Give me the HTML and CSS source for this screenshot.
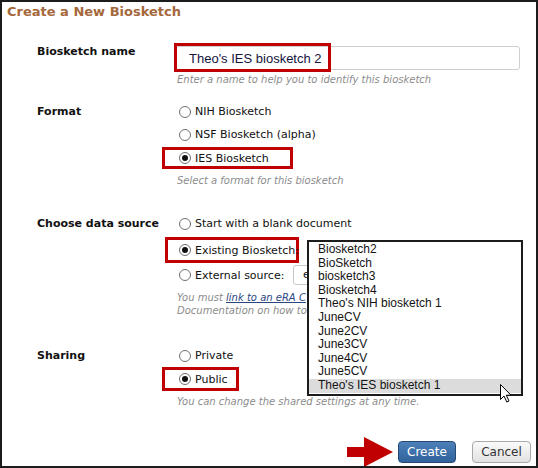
FILE: index.html
```html
<!DOCTYPE html>
<html lang="en">
<head>
    <meta charset="UTF-8">
    <title>Create a New Biosketch</title>
    <link rel="stylesheet" href="styles.css">
</head>
<body>
    <div class="dialog">
        <h2 class="title">Create a New Biosketch</h2>

        <form class="form">
            <div class="field">
                <div class="label">Biosketch name</div>
                <div class="control">
                    <div class="name-wrap">
                        <input type="text" class="text-input" value="Theo's IES biosketch 2">
                        <span class="name-mark"></span>
                    </div>
                    <div class="hint">Enter a name to help you to identify this biosketch</div>
                </div>
            </div>

            <div class="field field-format">
                <div class="label tall">Format</div>
                <div class="control">
                    <div class="opt"><span class="radio"></span>NIH Biosketch</div>
                    <div class="opt"><span class="radio"></span>NSF Biosketch (alpha)</div>
                    <div class="opt mark mark-format"><span class="radio checked"></span>IES Biosketch</div>
                    <div class="hint hint-format">Select a format for this biosketch</div>
                </div>
            </div>

            <div class="field field-source">
                <div class="label tall">Choose data source</div>
                <div class="control">
                    <div class="opt"><span class="radio"></span>Start with a blank document</div>
                    <div class="opt mark mark-source"><span class="radio checked"></span>Existing Biosketch:</div>
                    <div class="opt opt-external">
                        <span class="radio"></span><span class="ext-text">External source:</span>
                        <span class="select">e</span>
                    </div>
                    <div class="hint hint-source">
                        <div>You must <a href="#" class="link">link to an eRA C</a></div>
                        <div>Documentation on how to</div>
                    </div>
                </div>
            </div>

            <div class="field field-share">
                <div class="label tall">Sharing</div>
                <div class="control">
                    <div class="opt"><span class="radio"></span>Private</div>
                    <div class="opt mark mark-share"><span class="radio checked"></span>Public</div>
                    <div class="hint hint-share">You can change the shared settings at any time.</div>
                </div>
            </div>

            <div class="footer">
                <svg class="arrow" width="46" height="30" viewBox="0 0 46 30">
                    <path d="M0 10 H17 V0 L46 15 L17 30 V20 H0 Z" fill="#c00000"/>
                </svg>
                <button type="button" class="btn btn-primary">Create</button>
                <button type="button" class="btn btn-default">Cancel</button>
            </div>
        </form>

        <!-- dropdown of the existing biosketch select, shown open -->
        <ul class="listbox">
            <li>Biosketch2</li>
            <li>BioSketch</li>
            <li>biosketch3</li>
            <li>Biosketch4</li>
            <li>Theo's NIH biosketch 1</li>
            <li>JuneCV</li>
            <li>June2CV</li>
            <li>June3CV</li>
            <li>June4CV</li>
            <li>June5CV</li>
            <li class="hover">Theo's IES biosketch 1</li>
        </ul>

        <svg class="cursor" width="13" height="19" viewBox="0 0 13 19">
            <path d="M0.5 0.5 V15.5 L4 12 L6.8 18 L9 17 L6.3 11.2 H11 Z" fill="#fff" stroke="#000" stroke-width="1" stroke-linejoin="round"/>
        </svg>
    </div>
</body>
</html>
```

FILE: styles.css
```css
body {
    margin: 0;
    font-family: "DejaVu Sans", Verdana, sans-serif;
    font-size: 11px;
    color: #111;
    background: #fff;
}

.dialog {
    position: relative;
    width: 538px;
    height: 468px;
    box-sizing: border-box;
    border: 2px solid #1c1c1c;
    overflow: hidden;
}

.title {
    margin: 0;
    padding: 1px 0 0 5px;
    font-size: 13px;
    line-height: 18px;
    font-weight: bold;
    color: #a5683c;
}

.form {
    padding-top: 23px;
}

.field {
    display: grid;
    grid-template-columns: 140px 1fr;
    padding-left: 35px;
}

.label {
    font-weight: bold;
    line-height: 16px;
}

.label.tall {
    line-height: 23px;
}

.field-format {
    margin-top: 13px;
}

.field-source {
    margin-top: 24px;
}

.field-share {
    margin-top: 27px;
}

/* name input */
.name-wrap {
    position: relative;
    margin: 2px 0 0 -2px;
}

.text-input {
    display: block;
    width: 345px;
    height: 24px;
    box-sizing: border-box;
    border: 1px solid #cfcfcf;
    border-radius: 3px;
    padding: 0 0 0 13px;
    font-family: "Liberation Sans", Arial, sans-serif;
    font-size: 13px;
    color: #14143c;
    outline: none;
}

.name-mark {
    position: absolute;
    left: -1px;
    top: -3px;
    width: 157px;
    height: 29px;
    box-sizing: border-box;
    border: 3px solid #c00000;
}

.hint {
    margin-top: 3px;
    font-size: 10px;
    line-height: 14px;
    font-style: italic;
    color: #8c8c8c;
    white-space: nowrap;
}

.hint-format {
    margin-top: 5px;
}

.hint-source {
    margin-top: 4px;
    line-height: 13px;
}

.hint-share {
    margin-top: 4px;
}

.link {
    color: #2a4680;
}

/* radio options */
.opt {
    display: flex;
    align-items: center;
    height: 23px;
    white-space: nowrap;
}

.radio {
    position: relative;
    flex: none;
    width: 12px;
    height: 12px;
    box-sizing: border-box;
    margin: 0 4px 0 2px;
    border: 1px solid #707070;
    border-radius: 50%;
    background: #fff;
}

.radio.checked::after {
    content: "";
    position: absolute;
    left: 2px;
    top: 2px;
    width: 6px;
    height: 6px;
    border-radius: 50%;
    background: #111;
}

.mark {
    box-sizing: border-box;
    border: 3px solid #c00000;
}

.mark-format {
    width: 131px;
    height: 22px;
    margin: 1px 0 0 -15px;
    padding-left: 12px;
}

.mark-source {
    width: 134px;
    height: 26px;
    margin: 2px 0 0 -12px;
    padding-left: 9px;
}

.mark-share {
    width: 77px;
    height: 24px;
    margin-left: -15px;
    padding-left: 12px;
}

.opt-external {
    height: 24px;
}

.ext-text {
    width: 98px;
}

.select {
    width: 130px;
    height: 20px;
    box-sizing: border-box;
    border: 1px solid #c8c8c8;
    border-radius: 3px;
    padding-left: 9px;
    line-height: 18px;
}

/* buttons */
.footer {
    display: flex;
    justify-content: flex-end;
    align-items: center;
    margin-top: 28px;
    padding-right: 5px;
}

.arrow {
    margin-right: 5px;
}

.btn {
    height: 22px;
    box-sizing: border-box;
    border-radius: 4px;
    font-family: "DejaVu Sans", Verdana, sans-serif;
    font-size: 12px;
    padding: 0;
    cursor: pointer;
}

.btn-primary {
    width: 58px;
    margin-right: 16px;
    color: #fff;
    background: linear-gradient(#4d80b9, #30629b);
    border: 1px solid #264a74;
}

.btn-default {
    width: 59px;
    color: #333;
    background: linear-gradient(#fafafa, #e2e2e2);
    border: 1px solid #a9a9a9;
}

/* open dropdown list */
.listbox {
    position: absolute;
    left: 305px;
    top: 238px;
    width: 216px;
    height: 156px;
    box-sizing: border-box;
    margin: 0;
    padding: 1px 0 0;
    list-style: none;
    border: 2px solid #1c1c1c;
    background: #fff;
    font-family: "Liberation Sans", Arial, sans-serif;
    font-size: 12px;
    color: #141414;
}

.listbox li {
    line-height: 13.6px;
    padding-left: 9px;
}

.listbox li.hover {
    background: #dcdcdc;
}

.cursor {
    position: absolute;
    left: 498px;
    top: 382px;
}
```
